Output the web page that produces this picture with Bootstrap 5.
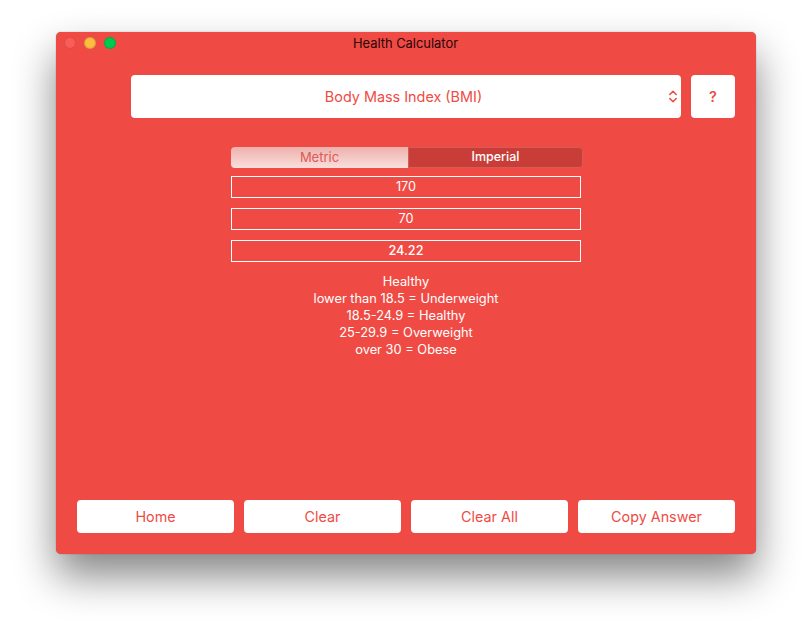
<!DOCTYPE html>
<html lang="en">
<head>
<meta charset="utf-8">
<title>Health Calculator</title>
<link href="https://cdn.jsdelivr.net/npm/bootstrap@5.3.0/dist/css/bootstrap.min.css" rel="stylesheet">
<style>
html, body { height: 100%; }
body { background: #fff; font-family: Inter, "Liberation Sans", sans-serif; overflow: hidden; padding: 32px 0 0 56px; }
.mac-window { width: 700px; height: 522px; background: #ef4b44; border-radius: 5px; box-shadow: 0 0 1px rgba(0,0,0,.55), 0 22px 42px rgba(0,0,0,.48); }
.title-bar { height: 22px; }
.title-text { font-size: 12.9px; line-height: 24px; color: #2a0504; padding-right: 1px; }
.lights { left: 8px; top: 5px; }
.light { width: 12px; height: 12px; border-radius: 50%; border: 1px solid rgba(0,0,0,.14); }
.light-r { background: #fc5b57; }
.light-y { background: #fdbc40; }
.light-g { background: #00c94f; }
.top-row { padding: 21px 21px 0 75px; }
.calc-select { width: 550px; height: 43px; border-radius: 4px; color: #ef4b44; font-size: 14.4px; padding-right: 5px; }
.calc-chevron { right: 2px; top: 14px; }
.help-btn { width: 44px; height: 43px; border-radius: 4px; color: #ef4b44; font-size: 14.4px; font-weight: 600; }
.form-col { width: 350px; margin: 29px 0 0 175px; }
.seg-ctl { width: 352px; height: 21px; border-radius: 4px; font-size: 12.5px; line-height: 20px; }
.seg-off { width: 177px; background: linear-gradient(#eeb0ac, #f9dfdc); color: #dc5a55; font-size: 13px; }
.seg-on { width: 175px; background: #c93d38; color: #fff; font-weight: 500; box-shadow: inset 0 0 0 1px rgba(255,255,255,.16); border-radius: 0 4px 4px 0; }
.num-field { height: 22px; border: 1px solid #fff; color: #fff; font-size: 12.7px; line-height: 20px; }
.field-one { margin-top: 8px; }
.field-next { margin-top: 10px; }
.result-text { color: #fff; font-size: 12.85px; line-height: 17px; margin-top: 11px; }
.foot-row { padding: 0 21px 21px; gap: 10px; }
.foot-btn { width: 157px; height: 33px; border-radius: 4px; color: #ef4b44; font-size: 14.35px; padding: 0; }
.foot-btn:hover, .help-btn:hover { background: #fff; color: #ef4b44; }
</style>
</head>
<body>
<div class="mac-window d-flex flex-column">
  <div class="title-bar position-relative text-center">
    <div class="lights position-absolute d-flex gap-2">
      <span class="light light-r"></span>
      <span class="light light-y"></span>
      <span class="light light-g"></span>
    </div>
    <div class="title-text">Health Calculator</div>
  </div>
  <div class="top-row d-flex gap-2 justify-content-between">
    <div class="calc-select bg-white position-relative d-flex align-items-center justify-content-center">
      <span>Body Mass Index (BMI)</span>
      <svg class="calc-chevron position-absolute" width="12" height="15" viewBox="0 0 12 15" fill="none" stroke="#ef4b44" stroke-width="1.6" stroke-linecap="round" stroke-linejoin="round"><path d="M2.800 5.500 6 2.300 9.200 5.500"/><path d="M2.800 9.500 6 12.700 9.200 9.500"/></svg>
    </div>
    <button type="button" class="btn help-btn bg-white border-0 p-0">?</button>
  </div>
  <div class="form-col flex-grow-1">
    <div class="seg-ctl d-flex overflow-hidden text-center">
      <div class="seg-off">Metric</div>
      <div class="seg-on">Imperial</div>
    </div>
    <div class="num-field field-one text-center">170</div>
    <div class="num-field field-next text-center">70</div>
    <div class="num-field field-next text-center fw-medium">24.22</div>
    <div class="result-text text-center">
      Healthy<br>
      lower than 18.5 = Underweight<br>
      18.5-24.9 = Healthy<br>
      25-29.9 = Overweight<br>
      over 30 = Obese
    </div>
  </div>
  <div class="foot-row d-flex">
    <button type="button" class="btn foot-btn bg-white border-0">Home</button>
    <button type="button" class="btn foot-btn bg-white border-0">Clear</button>
    <button type="button" class="btn foot-btn bg-white border-0">Clear All</button>
    <button type="button" class="btn foot-btn bg-white border-0">Copy Answer</button>
  </div>
</div>
<script src="https://cdn.jsdelivr.net/npm/bootstrap@5.3.0/dist/js/bootstrap.bundle.min.js"></script>
</body>
</html>
